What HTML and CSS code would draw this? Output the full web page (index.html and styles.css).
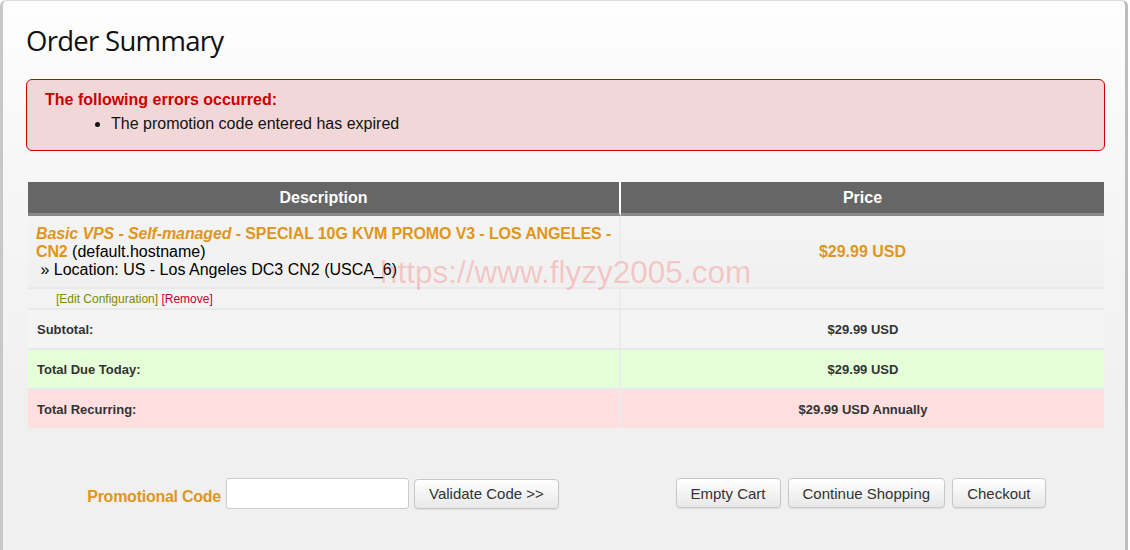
FILE: index.html
```html
<!doctype html>
<html>
<head>
  <meta charset="utf-8">
  <title>Order Summary</title>
  <link rel="stylesheet" href="styles.css">
</head>
<body>
  <div id="page">
    <h1>Order Summary</h1>

    <div class="errorbox">
      <strong>The following errors occurred:</strong>
      <ul>
        <li>The promotion code entered has expired</li>
      </ul>
    </div>

    <table class="cart">
      <tr>
        <th class="desc">Description</th>
        <th>Price</th>
      </tr>
      <tr class="item">
        <td class="desc">
          <b class="prod"><i>Basic VPS - Self-managed</i> - SPECIAL 10G KVM PROMO V3 - LOS ANGELES - CN2</b> (default.hostname)<br>
          &nbsp;» Location: US - Los Angeles DC3 CN2 (USCA_6)
        </td>
        <td class="price">$29.99 USD</td>
      </tr>
      <tr class="actions">
        <td class="desc"><a class="edit" href="#">[Edit Configuration]</a> <a class="remove" href="#">[Remove]</a></td>
        <td></td>
      </tr>
      <tr class="total subtotal">
        <td class="desc">Subtotal:</td>
        <td class="amt">$29.99 USD</td>
      </tr>
      <tr class="total due">
        <td class="desc">Total Due Today:</td>
        <td class="amt">$29.99 USD</td>
      </tr>
      <tr class="total recurring">
        <td class="desc">Total Recurring:</td>
        <td class="amt">$29.99 USD Annually</td>
      </tr>
    </table>

    <div class="watermark">https://www.flyzy2005.com</div>

    <div class="bottom">
      <form class="promo">
        <label for="promocode">Promotional Code</label>
        <input type="text" id="promocode">
        <button type="button">Validate Code &gt;&gt;</button>
      </form>
      <div class="cartbtns">
        <button type="button">Empty Cart</button>
        <button type="button">Continue Shopping</button>
        <button type="button">Checkout</button>
      </div>
    </div>
  </div>
</body>
</html>
```

FILE: styles.css
```css
html, body {
  margin: 0;
  padding: 0;
  background: #fff;
}
body {
  font-family: "Liberation Sans", Arial, sans-serif;
  color: #000;
}
#page {
  position: relative;
  width: 1128px;
  height: 560px;
  box-sizing: border-box;
  padding: 0 0 0 23px;
  border-left: 3px solid #c8c8c8;
  border-right: 3px solid #bdbdbd;
  border-top: 1px solid #dcdcdc;
  border-radius: 6px 6px 0 0;
  background: linear-gradient(#fefefe 0, #f7f7f7 150px, #f0f0f0 420px, #f0f0f0 100%);
}
h1 {
  margin: 0;
  padding-top: 21px;
  font-family: "Open Sans", sans-serif;
  font-weight: 400;
  font-size: 27.5px;
  line-height: 38px;
  letter-spacing: -0.7px;
  color: #111;
}
.errorbox {
  margin-top: 19px;
  width: 1079px;
  height: 72px;
  box-sizing: border-box;
  padding: 10px 18px 0 18px;
  border: 1px solid #cc0000;
  border-radius: 6px;
  background: #f2d7d8;
  font-size: 16px;
  line-height: 20px;
}
.errorbox strong {
  color: #cc0000;
}
.errorbox ul {
  margin: 4px 0 0 0;
  padding-left: 66px;
  color: #111;
}
.cart {
  margin: 31px 0 0 2px;
  width: 1076px;
  border-collapse: separate;
  border-spacing: 0;
  font-size: 16px;
}
.cart th {
  height: 31px;
  padding: 0;
  background: #666;
  color: #fff;
  font-weight: bold;
  border-bottom: 3px solid #898989;
}
.cart th.desc {
  width: 591px;
  border-right: 2px solid #fdfdfd;
}
.cart td {
  padding: 0 8px;
  border-top: 2px solid #e9e9e9;
}
.cart td.desc {
  border-right: 2px solid #ececec;
}
.cart tr.item td {
  border-top: 0;
  padding: 9px 8px 8px 8px;
  line-height: 18px;
  background: linear-gradient(#f4f4f4, #f0f0f0);
}
.cart tr.item td.desc {
  padding-right: 2px;
}
.prod {
  color: #e0961a;
  letter-spacing: -0.12px;
}
.price {
  text-align: center;
  font-weight: bold;
  color: #e0961a;
}
.actions td {
  height: 19px;
  font-size: 12px;
  background: #f3f3f3;
}
.actions td.desc {
  padding-left: 28px;
}
.actions a {
  text-decoration: none;
}
.edit {
  color: #7a8c00;
}
.remove {
  color: #cc0033;
}
.total td {
  height: 38px;
  font-size: 13px;
  font-weight: bold;
  color: #333;
  padding-left: 9px;
}
.total td.amt {
  text-align: center;
}
.subtotal td {
  background: #f4f4f4;
}
.due td {
  background: #e5ffd9;
}
.recurring td {
  background: #ffdfdf;
}
.watermark {
  position: absolute;
  left: 377px;
  top: 251px;
  font-size: 31.5px;
  line-height: 40px;
  color: rgba(255, 40, 40, 0.22);
  pointer-events: none;
}
.bottom {
  display: flex;
  margin: 50px 0 0 2px;
  width: 1076px;
}
.promo {
  width: 590px;
  display: flex;
  justify-content: center;
  align-items: center;
  gap: 5px;
  margin: 0;
}
.promo label {
  font-weight: bold;
  font-size: 16px;
  letter-spacing: -0.25px;
  color: #e0961a;
  margin-top: 6px;
}
.promo input {
  width: 183px;
  height: 31px;
  box-sizing: border-box;
  border: 1px solid #ccc;
  border-radius: 3px;
  background: #fff;
  margin: 0;
}
.cartbtns {
  width: 485px;
  display: flex;
  justify-content: center;
  gap: 7px;
}
button {
  height: 30px;
  padding: 0 14px;
  font-family: "Liberation Sans", Arial, sans-serif;
  font-size: 15px;
  color: #333;
  border: 1px solid #c8c8c8;
  border-radius: 4px;
  background: linear-gradient(#ffffff, #e8e8e8);
  box-shadow: 0 1px 1px rgba(0, 0, 0, 0.08);
}
```
